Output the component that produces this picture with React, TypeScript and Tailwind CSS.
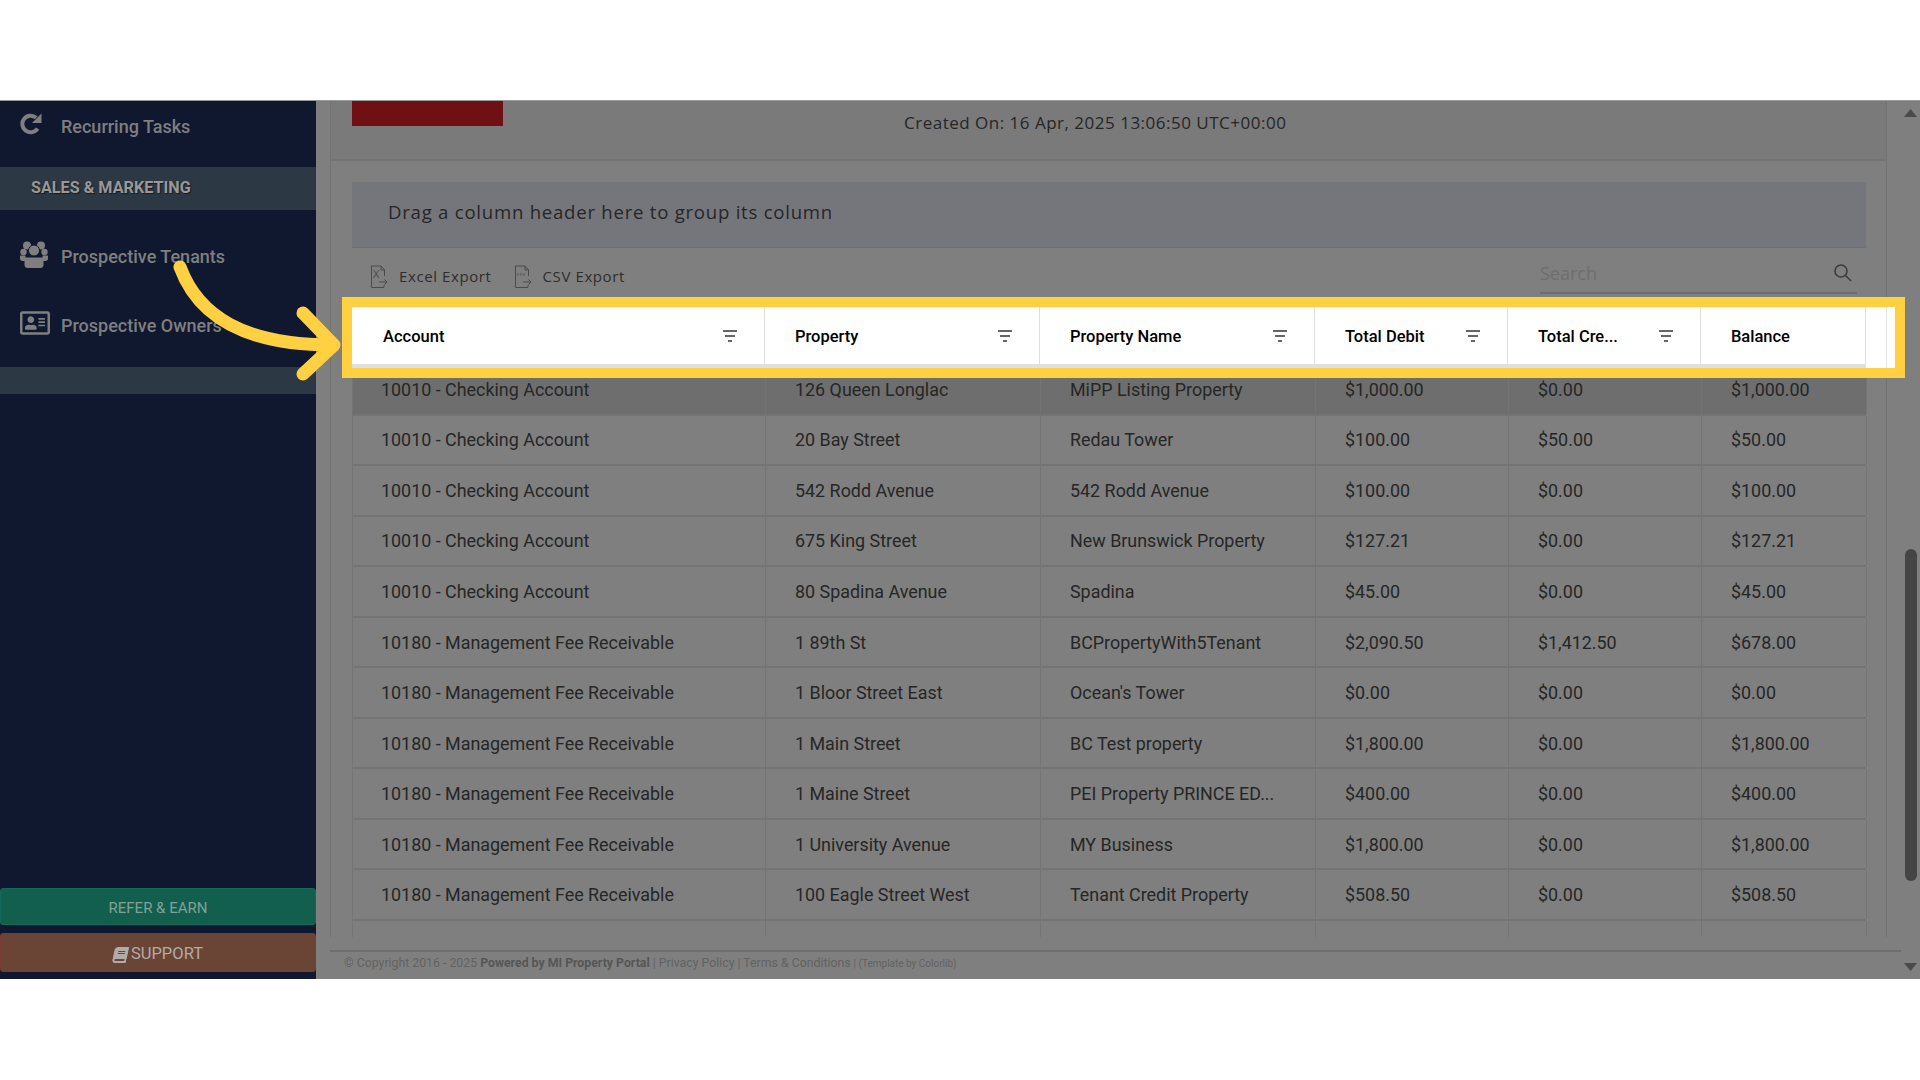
import React from "react";
import { FaRegAddressCard, FaBook } from "react-icons/fa";

const rows: [string, string, string, string, string, string][] = [
  ["10010 - Checking Account", "126 Queen Longlac", "MiPP Listing Property", "$1,000.00", "$0.00", "$1,000.00"],
  ["10010 - Checking Account", "20 Bay Street", "Redau Tower", "$100.00", "$50.00", "$50.00"],
  ["10010 - Checking Account", "542 Rodd Avenue", "542 Rodd Avenue", "$100.00", "$0.00", "$100.00"],
  ["10010 - Checking Account", "675 King Street", "New Brunswick Property", "$127.21", "$0.00", "$127.21"],
  ["10010 - Checking Account", "80 Spadina Avenue", "Spadina", "$45.00", "$0.00", "$45.00"],
  ["10180 - Management Fee Receivable", "1 89th St", "BCPropertyWith5Tenant", "$2,090.50", "$1,412.50", "$678.00"],
  ["10180 - Management Fee Receivable", "1 Bloor Street East", "Ocean's Tower", "$0.00", "$0.00", "$0.00"],
  ["10180 - Management Fee Receivable", "1 Main Street", "BC Test property", "$1,800.00", "$0.00", "$1,800.00"],
  ["10180 - Management Fee Receivable", "1 Maine Street", "PEI Property PRINCE ED...", "$400.00", "$0.00", "$400.00"],
  ["10180 - Management Fee Receivable", "1 University Avenue", "MY Business", "$1,800.00", "$0.00", "$1,800.00"],
  ["10180 - Management Fee Receivable", "100 Eagle Street West", "Tenant Credit Property", "$508.50", "$0.00", "$508.50"],
];

const FilterIcon = () => (
  <svg width="16" height="12" viewBox="0 0 16 12" className="absolute right-[26px] top-[23px]">
    <rect x="1" y="0" width="14" height="2" fill="#666" />
    <rect x="3" y="5" width="10" height="2" fill="#666" />
    <rect x="6" y="10" width="4" height="2" fill="#666" />
  </svg>
);

const DocIcon = ({ label, small }: { label: string; small?: boolean }) => (
  <svg width="18" height="24" viewBox="0 0 18 24" fill="none" stroke="#4a4a4a" strokeWidth="1">
    <path d="M11 1H1.5v21.5H14V20M11 1l3.5 4v6M11 1v4h3.5" />
    <path d="M9 17h8M14.5 14.5 17 17l-2.5 2.5" />
    <text
      x={small ? 2.5 : 3}
      y={small ? 11 : 13}
      stroke="none"
      fill="#4a4a4a"
      fontSize={small ? 5 : 11}
      fontFamily="Open Sans, sans-serif"
    >
      {label}
    </text>
  </svg>
);

const RepeatIcon = () => (
  <svg width="22" height="22" viewBox="0 0 22 22" fill="none">
    <path d="M17.6 15.5A8.3 8.3 0 1 1 16.2 4.8" stroke="#7f7f7f" strokeWidth="4" />
    <path d="M21.5 0.5V10H12z" fill="#7f7f7f" />
  </svg>
);

const GroupIcon = () => (
  <svg width="28" height="27" viewBox="0 0 28 27" fill="#7f7f7f">
    <circle cx="7" cy="4.5" r="4" />
    <circle cx="21" cy="4.5" r="4" />
    <circle cx="3.5" cy="11" r="3.2" />
    <circle cx="24.5" cy="11" r="3.2" />
    <path d="M0 14.5h5.5V20H2.5C1 20 0 19 0 17.5zM28 14.5h-5.5V20h3c1.500 0 2.500-1 2.500-2.500z" />
    <circle cx="14" cy="9.500" r="5.500" stroke="#10182f" strokeWidth="1" />
    <path d="M6 16.500h16c1 0 1.500 1 1.500 2v5.500c0 2-1.500 3-3 3H7.500c-1.500 0-3-1-3-3v-5.500c0-1 .5-2 1.500-2z" />
  </svg>
);

const headerCols = [
  "w-[413.4px]",
  "w-[275px]",
  "w-[275px]",
  "w-[193px]",
  "w-[193px]",
  "w-[164.6px]",
];

const colClasses = [
  "w-[413px]",
  "w-[275px]",
  "w-[275px]",
  "w-[193px]",
  "w-[193px]",
  "w-[165px]",
];

function SideItem({ icon, label, className }: { icon: React.ReactNode; label: string; className: string }) {
  return (
    <div className={`flex items-center text-[18px] font-medium text-[#7f7f7f] ${className}`}>
      <div className="flex w-[61px] items-center pb-[4px] pl-[20px]">{icon}</div>
      <span className="whitespace-nowrap">{label}</span>
    </div>
  );
}

export default function App() {
  return (
    <div className="relative h-[1080px] w-full overflow-hidden bg-white font-['Roboto',sans-serif]">
      <div className="h-[100px]" />
      <div className="flex h-[879px] border-t border-[#9a9a9a] bg-[#7f7f7f]">
        {/* Sidebar */}
        <aside className="flex w-[316px] shrink-0 flex-col bg-[#10182f]">
          <SideItem className="h-[50px]" icon={<RepeatIcon />} label="Recurring Tasks" />
          <div className="mt-[16px] flex h-[43px] items-center bg-[#2c3844] pl-[31px] text-[16.2px] font-bold text-[#989898] [text-shadow:1px_1px_1px_#1a1a1a]">
            SALES &amp; MARKETING
          </div>
          <SideItem className="mt-[18px] h-[56px]" icon={<GroupIcon />} label="Prospective Tenants" />
          <SideItem
            className="mt-[13px] h-[56px]"
            icon={<FaRegAddressCard className="h-[28px] w-[30px]" />}
            label="Prospective Owners"
          />
          <div className="mt-[14px] h-[27px] bg-[#2c3844]" />
          <div className="flex-1" />
          <div className="flex h-[37px] items-center justify-center rounded-[3px] border border-[#14695a] bg-[#125f4d] pt-[3px] text-[15px] text-[#83a096]">
            REFER &amp; EARN
          </div>
          <div className="mt-[8px] mb-[7px] flex h-[39px] items-center justify-center gap-[3px] rounded-[3px] border border-[#7c3a30] bg-[#6a4435] pt-[4px] text-[16.5px] text-[#b1aca8]">
            <FaBook className="h-[16px] w-[15px] -skew-x-12" />
            SUPPORT
          </div>
        </aside>

        {/* Main content */}
        <main className="flex min-w-0 flex-1 flex-col">
          <div className="mx-[14px] mr-[17px] flex h-[836px] flex-col border-x border-[#727272]">
            <div className="flex h-[60px] shrink-0 border-b-2 border-[#747474] bg-[#7a7a7a]">
              <div className="ml-[21px] h-[25px] w-[151px] bg-[#6e1014]" />
              <div className="ml-[401px] mt-[11px] font-['Open_Sans',sans-serif] text-[17px] leading-[22px] tracking-[0.5px] whitespace-nowrap text-[#262626]">
                Created On: 16 Apr, 2025 13:06:50 UTC+00:00
              </div>
            </div>
            <div className="flex flex-1 flex-col pl-[21px] pr-[20px] pt-[21px]">
              <div className="flex h-[66px] shrink-0 items-center border-b border-[#707070] bg-[#75767b] pb-[6px] pl-[36px] font-['Open_Sans',sans-serif] text-[18.6px] tracking-[0.75px] text-[#262626]">
                Drag a column header here to group its column
              </div>
              <div className="flex h-[59px] shrink-0 items-center pb-[2px] pl-[18px] font-['Open_Sans',sans-serif] text-[15px] tracking-[0.6px] text-[#2e2e2e]">
                <DocIcon label="X" />
                <span className="ml-[11px]">Excel Export</span>
                <span className="ml-[22px] flex items-center">
                  <DocIcon label="csv" small />
                </span>
                <span className="ml-[11px]">CSV Export</span>
                <div className="ml-auto mr-[9px] flex h-[46px] w-[317px] items-center justify-between self-start border-b-2 border-[#6c6c6c] pt-[6px] pr-[4px] text-[18px] tracking-normal text-[#6e6e6e]">
                  <span>Search</span>
                  <svg width="20" height="20" viewBox="0 0 20 20" fill="none" stroke="#3c3c3c" strokeWidth="1.6">
                    <circle cx="8" cy="8" r="6" />
                    <path d="M12.5 12.5 18 18" />
                  </svg>
                </div>
              </div>

              {/* Highlighted header */}
              <div className="relative z-10 -mb-[3px] flex h-[61px] w-[1543px] shrink-0 bg-white outline-[10px] outline-[#ffd042]">
                <div className="flex h-full w-[1514px] shrink-0 border-b-[4px] border-[#e0e0e0]">
                  {["Account", "Property", "Property Name", "Total Debit", "Total Cre...", "Balance"].map((h, i) => (
                    <div
                      key={h}
                      className={`relative flex shrink-0 items-center border-r border-[#dedede] pt-[4px] text-[16.5px] font-medium text-black ${headerCols[i]} ${
                        i === 0 ? "pl-[31px]" : "pl-[29.5px]"
                      }`}
                    >
                      {h}
                      {i < 5 && <FilterIcon />}
                    </div>
                  ))}
                </div>
                <div className="h-full w-[21px] shrink-0 border-r border-[#e4e4e4]" />
              </div>

              {/* Rows */}
              <div className="flex w-[1514px] flex-1 flex-col border-l border-[#747474]">
                {rows.map((r, idx) => (
                  <div
                    key={idx}
                    className={`flex h-[50.55px] shrink-0 border-b-2 border-[#747474] text-[17.9px] text-[#262626] ${
                      idx === 0 ? "bg-[#6e6e6e]" : ""
                    }`}
                  >
                    {r.map((c, i) => (
                      <div
                        key={i}
                        className={`flex shrink-0 items-center border-r border-[#747474] pt-[2px] whitespace-nowrap ${colClasses[i]} ${
                          i === 0 ? "pl-[28px]" : "pl-[29px]"
                        }`}
                      >
                        {c}
                      </div>
                    ))}
                  </div>
                ))}
                <div className="flex flex-1">
                  {colClasses.map((c, i) => (
                    <div key={i} className={`shrink-0 border-r border-[#747474] ${c}`} />
                  ))}
                </div>
              </div>
            </div>
          </div>
          <div className="mt-[13px] ml-[14px] mr-[3px] flex-1 border-t-2 border-[#6e6e6e] pl-[14px] text-[12.3px] leading-[22px] whitespace-nowrap text-[#626262]">
            © Copyright 2016 - 2025 <b className="text-[#565656]">Powered by MI Property Portal</b> | Privacy Policy | Terms &amp; Conditions <span className="text-[10px]">| (Template by Colorlib)</span>
          </div>
        </main>

        {/* Scrollbar */}
        <div className="relative flex w-[16px] shrink-0 flex-col items-center">
          <svg width="13" height="8" viewBox="0 0 13 8" className="mt-[8px] mr-[4px]" fill="#4a4a4a">
            <path d="M6.500 0 13 8H0z" />
          </svg>
          <div className="mt-[432px] mr-[3px] h-[332px] w-[12px] rounded-full bg-[#454545]" />
          <div className="flex-1" />
          <svg width="13" height="8" viewBox="0 0 13 8" className="mb-[8px] mr-[4px]" fill="#4a4a4a">
            <path d="M0 0h13L6.500 8z" />
          </svg>
        </div>
      </div>

      {/* Tutorial arrow */}
      <svg
        className="absolute left-[160px] top-[250px]"
        width="200"
        height="140"
        viewBox="0 0 200 140"
        fill="none"
        stroke="#ffd042"
        strokeWidth="13"
        strokeLinecap="round"
        strokeLinejoin="round"
      >
        <path d="M20 17C38 66 84 95 172 95" />
        <path d="M143 63 174 95 143 124" />
      </svg>
    </div>
  );
}
